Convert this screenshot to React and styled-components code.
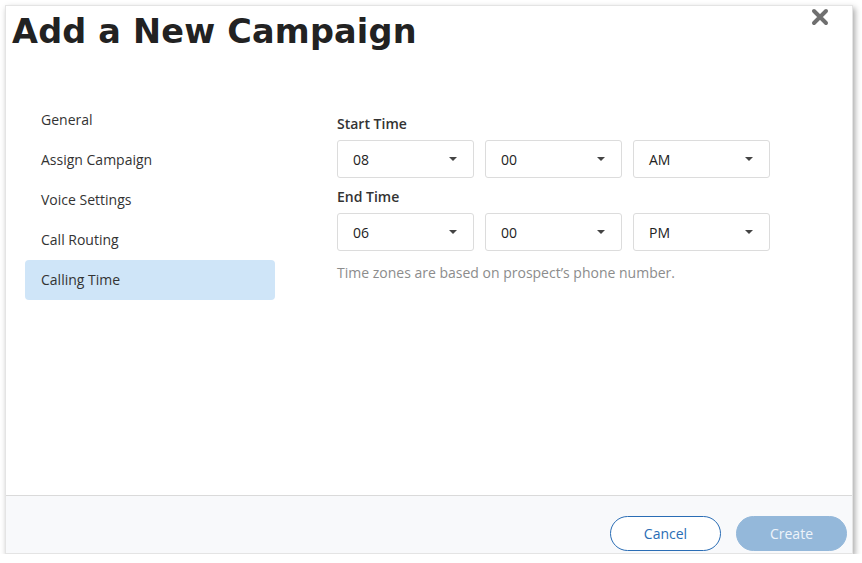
import React from "react";
import styled, { createGlobalStyle } from "styled-components";

const GlobalStyle = createGlobalStyle`
  body {
    margin: 0;
    background: #ffffff;
    font-family: "Open Sans", "Noto Sans", sans-serif;
  }
`;

const Modal = styled.div`
  margin: 5px 0 0 5px;
  width: 848px;
  height: 549px;
  background: #fff;
  border: 1px solid #e4e4e4;
  box-sizing: border-box;
  box-shadow: 2px 3px 6px rgba(0, 0, 0, 0.35);
  display: flex;
  flex-direction: column;
  position: relative;
`;

const Title = styled.h1`
  margin: 0;
  padding: 0 0 0 6px;
  font-family: "DejaVu Sans", "Noto Sans", sans-serif;
  font-weight: 700;
  font-size: 33.5px;
  letter-spacing: 0.2px;
  line-height: 52px;
  color: #222;
`;

const Close = styled.button`
  position: absolute;
  top: 2px;
  right: 22px;
  border: 0;
  background: none;
  padding: 0;
  width: 20px;
  height: 20px;
  cursor: pointer;
`;

const Body = styled.div`
  flex: 1;
  display: flex;
  padding: 42px 0 0 19px;
`;

const Nav = styled.ul`
  list-style: none;
  margin: 0;
  padding: 0;
  width: 250px;
  display: flex;
  flex-direction: column;
`;

const NavItem = styled.li`
  height: 40px;
  line-height: 40px;
  padding-left: 16px;
  font-size: 14px;
  color: #333;
  border-radius: 4px;
  background: ${(p) => (p.$active ? "#cfe5f8" : "transparent")};
`;

const Form = styled.div`
  margin-left: 62px;
  padding-top: 14px;
  display: flex;
  flex-direction: column;
`;

const Label = styled.div`
  font-size: 14px;
  font-weight: 600;
  color: #333;
  line-height: 20px;
  margin-bottom: 6px;
  margin-top: ${(p) => (p.$gap ? "9px" : "0")};
`;

const Row = styled.div`
  display: flex;
  gap: 11px;
`;

const Select = styled.div`
  width: 137px;
  height: 38px;
  box-sizing: border-box;
  border: 1px solid #dcdcdc;
  border-radius: 3px;
  display: flex;
  align-items: center;
  justify-content: space-between;
  padding: 0 16px 0 15px;
  font-size: 14px;
  color: #222;
`;

const Caret = styled.span`
  width: 0;
  height: 0;
  border-left: 4px solid transparent;
  border-right: 4px solid transparent;
  border-top: 4px solid #444;
`;

const Hint = styled.div`
  margin-top: 12px;
  font-size: 14px;
  color: #8c8c8c;
`;

const Footer = styled.div`
  height: 58px;
  border-top: 1px solid #dadada;
  background: #f8f9fb;
  display: flex;
  justify-content: flex-end;
  align-items: flex-end;
  gap: 15px;
  padding: 0 5px 2px 0;
  box-sizing: border-box;
`;

const Button = styled.button`
  width: 111px;
  height: 35px;
  border-radius: 18px;
  font-family: "Open Sans", "Noto Sans", sans-serif;
  font-size: 14px;
  cursor: pointer;
  border: 1px solid ${(p) => (p.$primary ? "#94b8da" : "#2a6db5")};
  background: ${(p) => (p.$primary ? "#94b8da" : "#fff")};
  color: ${(p) => (p.$primary ? "#eef4fa" : "#2a6db5")};
`;

const navItems = [
  "General",
  "Assign Campaign",
  "Voice Settings",
  "Call Routing",
  "Calling Time",
];

const TimeRow = ({ values }) => (
  <Row>
    {values.map((v, i) => (
      <Select key={i}>
        {v}
        <Caret />
      </Select>
    ))}
  </Row>
);

export default function App() {
  return (
    <>
      <GlobalStyle />
      <Modal>
        <Title>Add a New Campaign</Title>
        <Close aria-label="Close">
          <svg width="18" height="18" viewBox="0 0 18 18">
            <path
              d="M3 3 L15 15 M15 3 L3 15"
              stroke="#6f6f6f"
              strokeWidth="4"
              strokeLinecap="round"
            />
          </svg>
        </Close>
        <Body>
          <Nav>
            {navItems.map((n) => (
              <NavItem key={n} $active={n === "Calling Time"}>
                {n}
              </NavItem>
            ))}
          </Nav>
          <Form>
            <Label>Start Time</Label>
            <TimeRow values={["08", "00", "AM"]} />
            <Label $gap>End Time</Label>
            <TimeRow values={["06", "00", "PM"]} />
            <Hint>Time zones are based on prospect’s phone number.</Hint>
          </Form>
        </Body>
        <Footer>
          <Button>Cancel</Button>
          <Button $primary>Create</Button>
        </Footer>
      </Modal>
    </>
  );
}
